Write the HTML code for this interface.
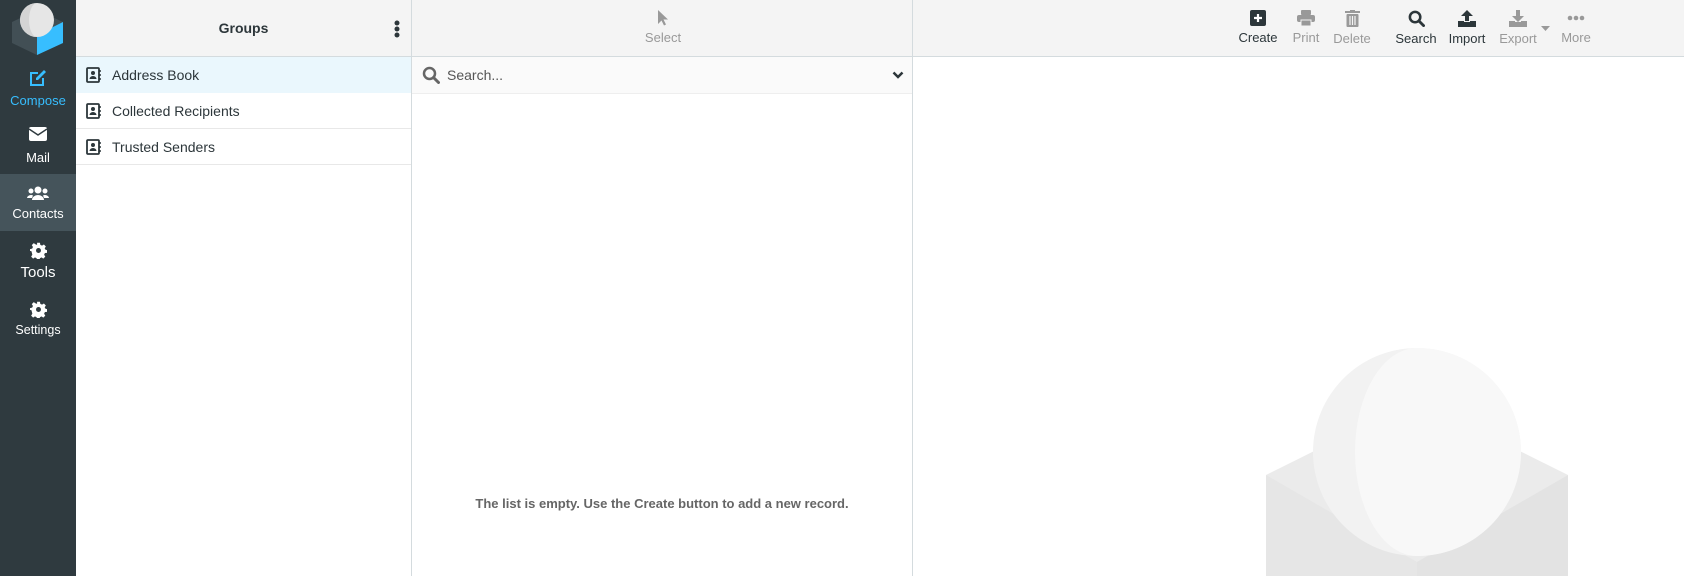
<!DOCTYPE html>
<html><head><meta charset="utf-8"><style>
*{margin:0;padding:0;box-sizing:border-box}
body{width:1684px;height:576px;overflow:hidden;font-family:"Liberation Sans",sans-serif;background:#fff;position:relative;color:#2c363a}
.abs{position:absolute}
#side{left:0;top:0;width:76px;height:576px;background:#2f3a3f}
.nav{position:absolute;left:0;width:76px;text-align:center;color:#fff;font-size:13px}
.nav svg{display:block;margin:0 auto}
#groups{left:76px;top:0;width:336px;height:576px;border-right:1px solid #d4dbde}
.hdr{background:#f4f4f4;border-bottom:1px solid #d4dbde;height:57px}
.row{height:36px;border-bottom:1px solid #e8e8e8;font-size:14px;display:flex;align-items:center;padding-left:10px}
.row svg{margin-right:10px}
#list{left:412px;top:0;width:501px;height:576px;border-right:1px solid #d4dbde}
#main{left:913px;top:0;width:771px;height:576px}
.tb{position:absolute;top:0;text-align:center;font-size:13px;width:60px;margin-left:-30px}
.tb svg{display:block;margin:10px auto 4px}
.dis{color:#999}
</style></head><body>
<div id="side" class="abs">
 <svg class="abs" style="left:0;top:0" width="76" height="60" viewBox="0 0 76 60">
  <polygon points="12,22 37,10 63,22 63,43 37,55 12,43" fill="#424f55"/>
  <polygon points="37,35 63,22 63,43 37,55" fill="#37beff"/>
  <circle cx="37" cy="20" r="17" fill="#e6e6e6"/>
  <path d="M37 3a17 17 0 0 0 0 34a8 17 0 0 1 0-34z" fill="#d4d4d4"/>
 </svg>
 <div class="nav" style="top:68px;color:#37beff"><svg width="20" height="18" viewBox="0 0 20 18"><path d="M2 4h8v2H4v10h10v-6h2v8H2z" fill="#37beff"/><path d="M8 10l8-8 2 2-8 8H8z" fill="#37beff"/></svg><div style="margin-top:7px">Compose</div></div>
 <div class="nav" style="top:127px"><svg width="18" height="14" viewBox="0 0 18 14"><rect width="18" height="14" rx="2" fill="#fff"/><path d="M0 2l9 6 9-6" stroke="#2f3a3f" stroke-width="1.5" fill="none"/></svg><div style="margin-top:9px">Mail</div></div>
 <div class="nav" style="top:174px;height:57px;background:#45545b;padding-top:12px"><svg width="22" height="14" viewBox="0 0 22 14"><circle cx="11" cy="4" r="3.5" fill="#fff"/><circle cx="4" cy="5" r="2.5" fill="#fff"/><circle cx="18" cy="5" r="2.5" fill="#fff"/><path d="M5 14a6 5 0 0 1 12 0zM0 12a4 3.5 0 0 1 6-2.5L5 12zM22 12a4 3.5 0 0 0-6-2.5l1 2.5z" fill="#fff"/></svg><div style="margin-top:6px">Contacts</div></div>
 <div class="nav" style="top:242px;font-size:15px"><svg width="17" height="17" viewBox="0 0 24 24"><path d="M10 1h4l.6 3 2.4 1.2 2.6-1.7 2.8 2.8-1.7 2.6L21.9 11l3 .6-.9 3.8-2.9.2-1.2 2.4 1.7 2.6-2.8 2.8-2.6-1.7-2.2 1.2-.6 3H10l-.6-3-2.4-1.2-2.6 1.7-2.8-2.8 1.7-2.6L2.1 13 -.9 12.4 0 10l3-.6 1.2-2.4-1.7-2.6 2.8-2.8 2.6 1.7L10 4z" fill="#fff"/><circle cx="12" cy="12" r="3.5" fill="#2f3a3f"/></svg><div style="margin-top:5px">Tools</div></div>
 <div class="nav" style="top:301px;font-size:12.5px"><svg width="17" height="17" viewBox="0 0 24 24"><path d="M10 1h4l.6 3 2.4 1.2 2.6-1.7 2.8 2.8-1.7 2.6L21.9 11l3 .6-.9 3.8-2.9.2-1.2 2.4 1.7 2.6-2.8 2.8-2.6-1.7-2.2 1.2-.6 3H10l-.6-3-2.4-1.2-2.6 1.7-2.8-2.8 1.7-2.6L2.1 13 -.9 12.4 0 10l3-.6 1.2-2.4-1.7-2.6 2.8-2.8 2.6 1.7L10 4z" fill="#fff"/><circle cx="12" cy="12" r="3.5" fill="#2f3a3f"/></svg><div style="margin-top:5px">Settings</div></div>
</div>
<div id="groups" class="abs">
 <div class="hdr" style="position:relative"><div style="text-align:center;line-height:57px;font-weight:bold;font-size:14px">Groups</div>
  <svg class="abs" style="left:318px;top:20px" width="6" height="18"><circle cx="3" cy="3" r="2.5" fill="#2c363a"/><circle cx="3" cy="9" r="2.5" fill="#2c363a"/><circle cx="3" cy="15" r="2.5" fill="#2c363a"/></svg></div>
 <div class="row" style="background:#eaf7fd;border-bottom-color:#eaf7fd"><svg width="16" height="16" viewBox="0 0 16 16"><rect x="1" y="1" width="12" height="14" rx="1" fill="none" stroke="#2c363a" stroke-width="1.8"/><circle cx="7" cy="6" r="2" fill="#2c363a"/><path d="M3.5 12a3.5 3 0 0 1 7 0z" fill="#2c363a"/><path d="M14 3v2M14 7v2M14 11v2" stroke="#2c363a" stroke-width="1.5"/></svg>Address Book</div>
 <div class="row"><svg width="16" height="16" viewBox="0 0 16 16"><rect x="1" y="1" width="12" height="14" rx="1" fill="none" stroke="#2c363a" stroke-width="1.8"/><circle cx="7" cy="6" r="2" fill="#2c363a"/><path d="M3.5 12a3.5 3 0 0 1 7 0z" fill="#2c363a"/><path d="M14 3v2M14 7v2M14 11v2" stroke="#2c363a" stroke-width="1.5"/></svg>Collected Recipients</div>
 <div class="row"><svg width="16" height="16" viewBox="0 0 16 16"><rect x="1" y="1" width="12" height="14" rx="1" fill="none" stroke="#2c363a" stroke-width="1.8"/><circle cx="7" cy="6" r="2" fill="#2c363a"/><path d="M3.5 12a3.5 3 0 0 1 7 0z" fill="#2c363a"/><path d="M14 3v2M14 7v2M14 11v2" stroke="#2c363a" stroke-width="1.5"/></svg>Trusted Senders</div>
</div>
<div id="list" class="abs">
 <div class="hdr" style="position:relative"><div class="tb dis" style="left:251px"><svg width="12" height="16" viewBox="0 0 12 16"><path d="M1 0v14l3.5-3.5 2.5 5 2-1-2.5-5H11z" fill="#999"/></svg>Select</div></div>
 <div style="height:37px;border-bottom:1px solid #eee;background:#fafafa;display:flex;align-items:center;padding-left:10px;font-size:14px;color:#555;position:relative">
  <svg width="18" height="18" viewBox="0 0 18 18" style="margin-right:7px"><circle cx="7.5" cy="7.5" r="5.5" fill="none" stroke="#666" stroke-width="2.5"/><path d="M11.5 11.5l5 5" stroke="#666" stroke-width="3" stroke-linecap="round"/></svg>Search...
  <svg class="abs" style="right:8px;top:14px" width="12" height="9" viewBox="0 0 12 9"><path d="M1.5 1.5l4.5 4.5 4.5-4.5" stroke="#2c363a" stroke-width="2.5" fill="none"/></svg></div>
 <div class="abs" style="left:0;width:500px;top:496px;text-align:center;font-weight:bold;font-size:13px;color:#666">The list is empty. Use the Create button to add a new record.</div>
</div>
<div id="main" class="abs">
 <div class="hdr" style="position:relative"></div>
 <svg class="abs" style="left:353px;top:340px" width="302" height="236" viewBox="0 0 302 236">
  <polygon points="0,135 151,60 302,135 302,236 0,236" fill="#ebebeb"/>
  <polygon points="151,222 302,135 302,236 151,236" fill="#e3e3e3"/>
  <polygon points="0,135 151,222 151,236 0,236" fill="#e6e6e6"/>
  <circle cx="151" cy="112" r="104" fill="#f2f2f2"/>
  <path d="M151 8a104 104 0 0 1 0 208a62 104 0 0 1 0-208z" fill="#f8f8f8"/>
 </svg>
</div>
<div class="tb" style="left:1258px"><svg width="16" height="16"><rect width="16" height="16" rx="2" fill="#2c363a"/><path d="M8 4v8M4 8h8" stroke="#fff" stroke-width="2.2"/></svg>Create</div>
<div class="tb dis" style="left:1306px"><svg width="18" height="16" viewBox="0 0 18 16"><rect x="4" y="0" width="10" height="5" rx="1" fill="#999"/><rect x="0" y="5" width="18" height="7" rx="2" fill="#999"/><rect x="4" y="10" width="10" height="6" fill="#999" stroke="#f4f4f4" stroke-width="1"/></svg>Print</div>
<div class="tb dis" style="left:1352px"><svg width="15" height="17" viewBox="0 0 15 17"><rect x="0" y="1" width="15" height="2" fill="#999"/><rect x="5" y="0" width="5" height="2" fill="#999"/><rect x="1.5" y="4" width="12" height="13" rx="1" fill="#999"/><path d="M5 6v9M7.5 6v9M10 6v9" stroke="#f4f4f4" stroke-width="1.2"/></svg>Delete</div>
<div class="tb" style="left:1416px"><svg width="17" height="17" viewBox="0 0 18 18"><circle cx="7.5" cy="7.5" r="5.5" fill="none" stroke="#2c363a" stroke-width="2.7"/><path d="M11.5 11.5l5 5" stroke="#2c363a" stroke-width="3" stroke-linecap="round"/></svg>Search</div>
<div class="tb" style="left:1467px"><svg width="18" height="17" viewBox="0 0 18 17"><path d="M9 0l6 6h-4v5H7V6H3z" fill="#2c363a"/><path d="M0 11h6v1h6v-1h6v6H0z" fill="#2c363a"/></svg>Import</div>
<div class="tb dis" style="left:1518px"><svg width="18" height="17" viewBox="0 0 18 17"><path d="M7 0h4v6h4l-6 6-6-6h4z" fill="#999"/><path d="M0 11h6v1h6v-1h6v6H0z" fill="#999"/></svg>Export</div>
<svg class="abs" style="left:1541px;top:26px" width="9" height="5"><path d="M0 0h9L4.5 5z" fill="#999"/></svg>
<div class="tb dis" style="left:1576px"><svg width="18" height="16" viewBox="0 0 18 16"><circle cx="3" cy="8" r="2.3" fill="#999"/><circle cx="9" cy="8" r="2.3" fill="#999"/><circle cx="15" cy="8" r="2.3" fill="#999"/></svg>More</div>
</body></html>
